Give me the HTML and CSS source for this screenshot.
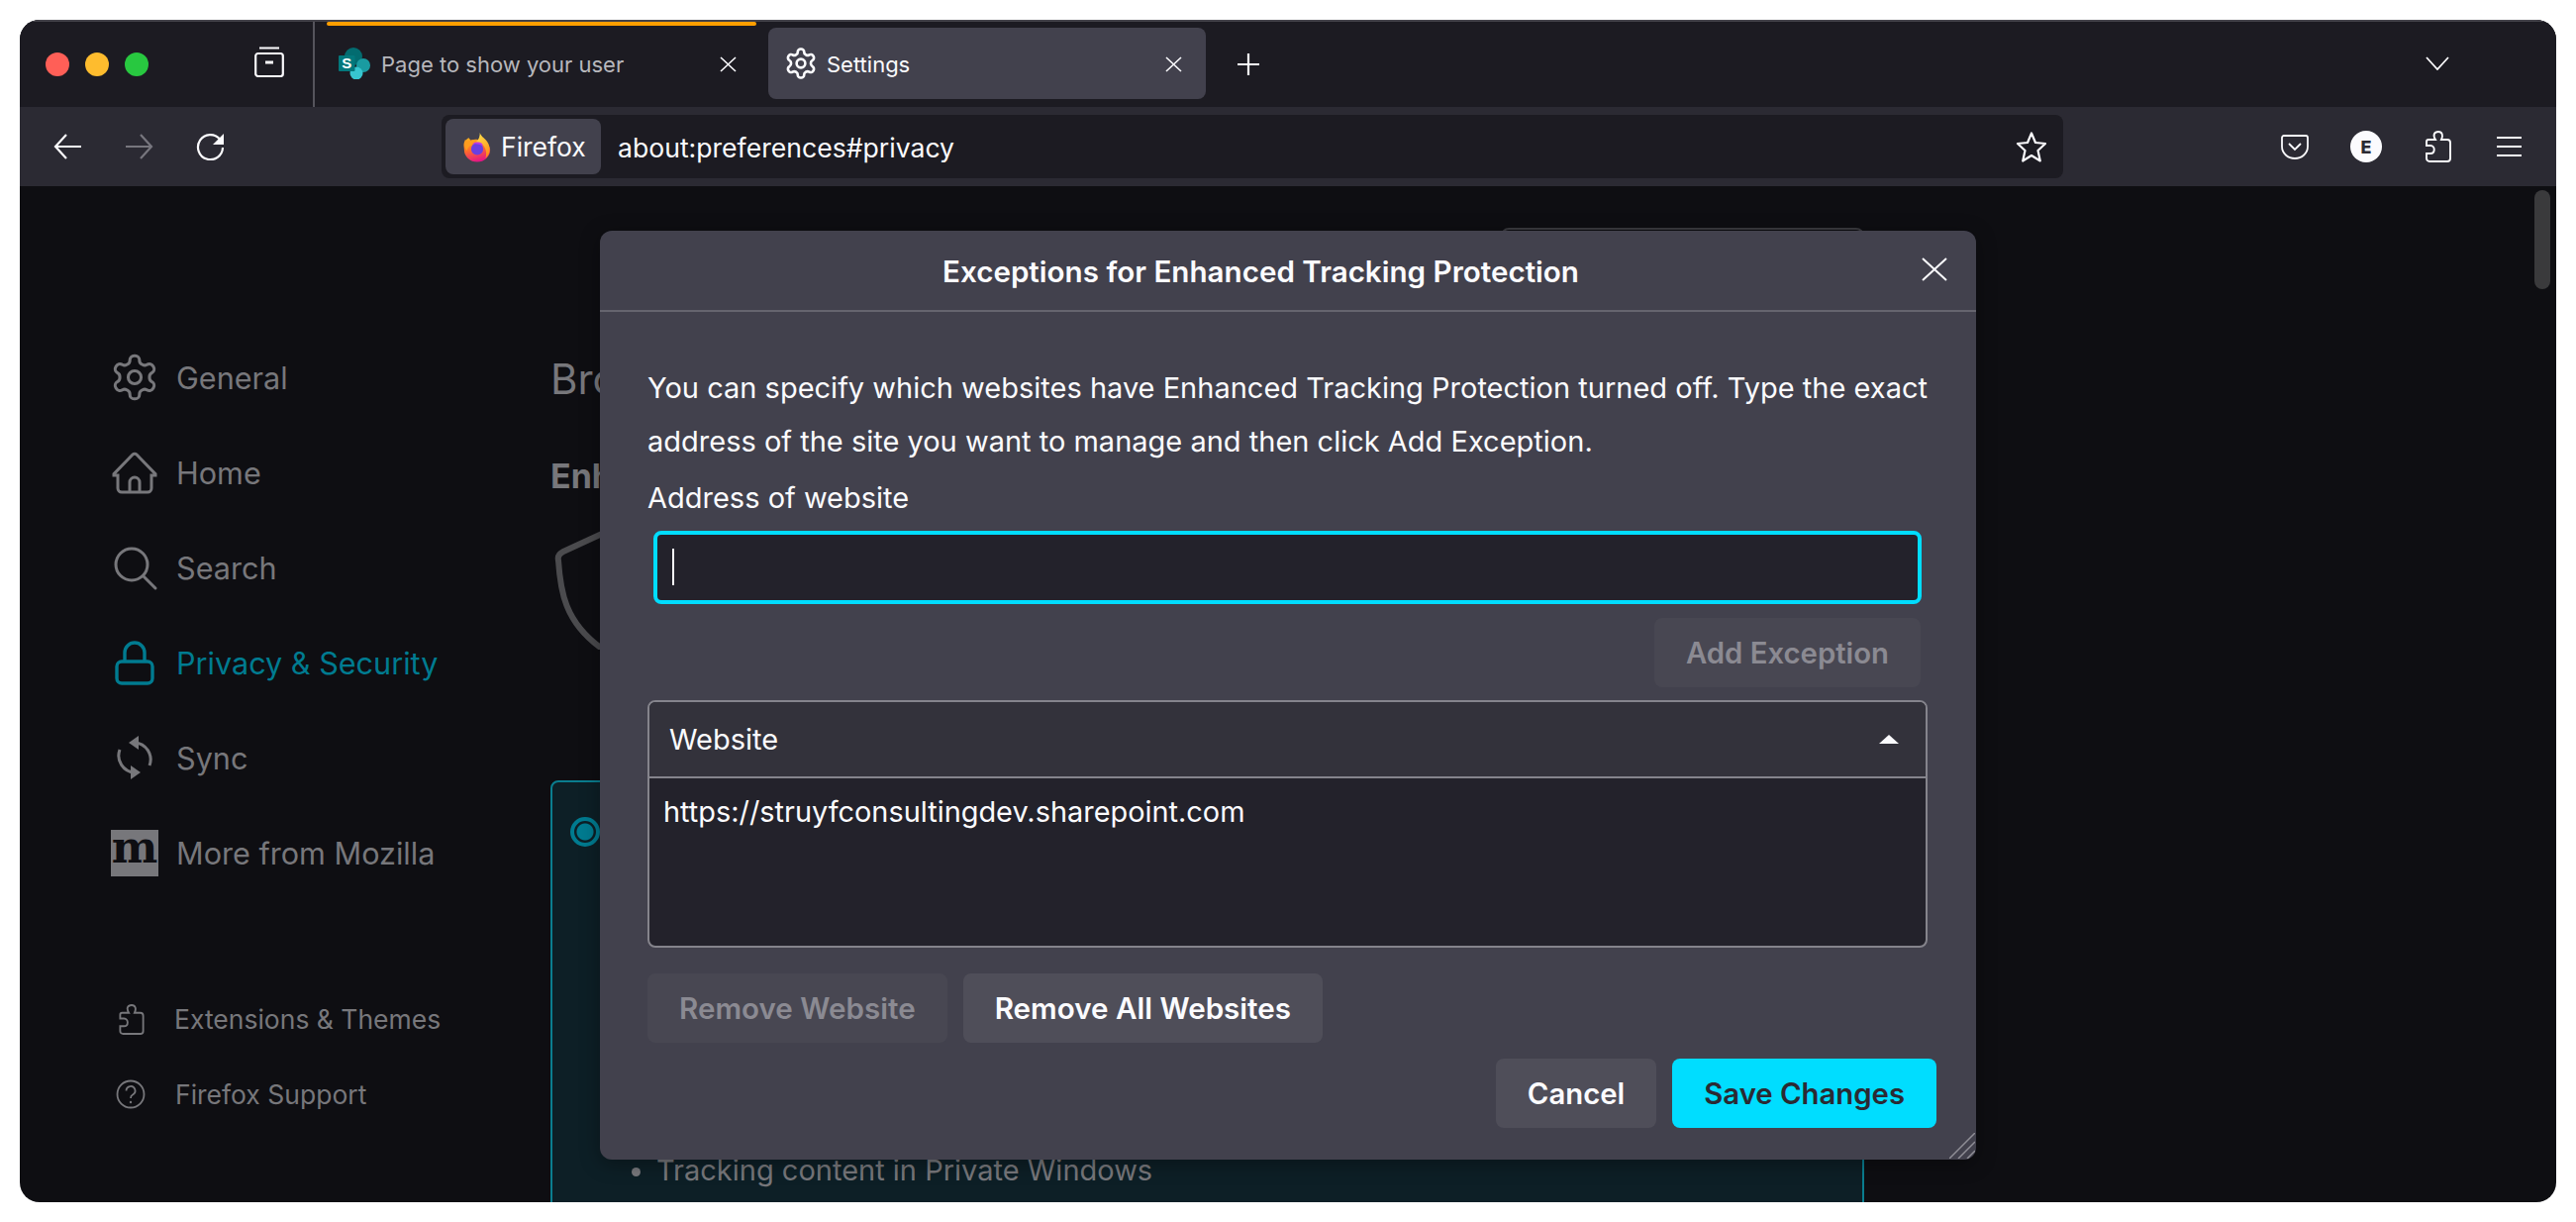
FILE: index.html
```html
<!DOCTYPE html>
<html lang="en">
<head>
    <meta charset="UTF-8">
    <title>Settings</title>
    <link rel="stylesheet" href="styles.css">
</head>
<body>
    <svg class="defs" aria-hidden="true">
        <symbol id="gear" viewBox="1 1 22 22">
            <path d="M12.22 2h-.44a2 2 0 0 0-2 2v.18a2 2 0 0 1-1 1.73l-.43.25a2 2 0 0 1-2 0l-.15-.08a2 2 0 0 0-2.73.73l-.22.38a2 2 0 0 0 .73 2.73l.15.1a2 2 0 0 1 1 1.72v.51a2 2 0 0 1-1 1.74l-.15.09a2 2 0 0 0-.73 2.73l.22.38a2 2 0 0 0 2.73.73l.15-.08a2 2 0 0 1 2 0l.43.25a2 2 0 0 1 1 1.73V20a2 2 0 0 0 2 2h.44a2 2 0 0 0 2-2v-.18a2 2 0 0 1 1-1.73l.43-.25a2 2 0 0 1 2 0l.15.08a2 2 0 0 0 2.73-.73l.22-.39a2 2 0 0 0-.73-2.73l-.15-.08a2 2 0 0 1-1-1.74v-.5a2 2 0 0 1 1-1.74l.15-.09a2 2 0 0 0 .73-2.73l-.22-.38a2 2 0 0 0-2.73-.73l-.15.08a2 2 0 0 1-2 0l-.43-.25a2 2 0 0 1-1-1.73V4a2 2 0 0 0-2-2z"/>
            <circle cx="12" cy="12" r="3"/>
        </symbol>
        <symbol id="puzzle" viewBox="0 0 26 32">
            <path d="M10 9C7 4 9 1 13 1c4 0 5 4 3 8h6a3 3 0 0 1 3 3v16a3 3 0 0 1-3 3H4a3 3 0 0 1-3-3v-5h4c5 0 5-8 0-8H1v-4a2 2 0 0 1 2-2z"/>
        </symbol>
    </svg>

    <div class="window">
        <!-- tab strip -->
        <div class="tabbar">
            <div class="lights">
                <span class="light red"></span>
                <span class="light yellow"></span>
                <span class="light green"></span>
            </div>
            <svg class="fxview" viewBox="0 0 30 31" fill="none" stroke="#fbfbfe" stroke-width="2.2">
                <path d="M5 1.5h20"/>
                <rect x="1.2" y="7" width="27.6" height="23" rx="2.5"/>
                <path d="M11 16h8" stroke-width="3"/>
            </svg>
            <div class="tab-sep"></div>
            <div class="tab tab-page">
                <span class="tab-line"></span>
                <svg class="favicon" viewBox="0 0 32 32">
                    <circle cx="15" cy="9" r="9" fill="#036c70"/>
                    <circle cx="25" cy="18" r="7" fill="#1a9ba1"/>
                    <circle cx="18" cy="26" r="6.500" fill="#37c6d0"/>
                    <rect x="0" y="8" width="16.500" height="16" rx="1" fill="#03787c"/>
                    <text x="8.200" y="21" class="favicon-s">S</text>
                </svg>
                <span class="tab-title">Page to show your user</span>
                <svg class="tab-close" viewBox="0 0 17 16" fill="none" stroke="#fbfbfe" stroke-width="1.6"><path d="M1 1l15 14M16 1L1 15"/></svg>
            </div>
            <div class="tab tab-active">
                <svg class="tab-gear" fill="none" stroke="#fbfbfe" stroke-width="1.8"><use href="#gear"/></svg>
                <span class="tab-title">Settings</span>
                <svg class="tab-close" viewBox="0 0 17 16" fill="none" stroke="#fbfbfe" stroke-width="1.6"><path d="M1 1l15 14M16 1L1 15"/></svg>
            </div>
            <svg class="new-tab" viewBox="0 0 24 24" fill="none" stroke="#fbfbfe" stroke-width="2.2"><path d="M12 1v22M1 12h22"/></svg>
            <svg class="tab-list" viewBox="0 0 24 14" fill="none" stroke="#fbfbfe" stroke-width="1.8"><path d="M1 1l11 12L23 1"/></svg>
        </div>

        <!-- toolbar -->
        <div class="toolbar">
            <svg class="nav-icon" viewBox="0 0 29 26" fill="none" stroke="#fbfbfe" stroke-width="2.2"><path d="M28 13H2M13 1L2 13l11 12"/></svg>
            <svg class="nav-icon nav-forward" viewBox="0 0 29 26" fill="none" stroke="#77767e" stroke-width="2.2"><path d="M1 13h26M16 1l11 12-11 12"/></svg>
            <svg class="nav-icon nav-reload" viewBox="0 0 29 28" fill="none" stroke="#fbfbfe" stroke-width="2.2">
                <path d="M24 6.5A12.500 12.500 0 1 0 27 15"/>
                <path d="M28 1v11H17z" fill="#fbfbfe" stroke="none"/>
            </svg>
            <div class="urlbar">
                <div class="identity">
                    <svg class="fx-logo" viewBox="0 0 32 32">
                        <defs>
                            <linearGradient id="fxBase" x1="0.2" y1="0" x2="0.5" y2="1">
                                <stop offset="0" stop-color="#ffb31f"/>
                                <stop offset="0.5" stop-color="#ff6a2c"/>
                                <stop offset="1" stop-color="#e31587"/>
                            </linearGradient>
                            <linearGradient id="fxFlame" x1="0.3" y1="0" x2="0.7" y2="1">
                                <stop offset="0" stop-color="#ffe04a"/>
                                <stop offset="1" stop-color="#ff8a16"/>
                            </linearGradient>
                        </defs>
                        <path d="M2 11c1-2 3-4 5-5l3 4c2-1 4-2 6-2 6 0 14 4 14 11a14 13 0 0 1-28 0c0-3-1-5 0-8z" fill="url(#fxBase)"/>
                        <path d="M19 0c0 3 3 5 6 8 4 4 5 9 4 14-1 3-3 5-4 6 2-6 0-13-5-16-2-1-4-1-5-2 3-2 4-6 4-10z" fill="url(#fxFlame)"/>
                        <path d="M3 8l3 2c3-2 8-3 11-2-2 1-6 3-6 5-1 2-3 1-4 3-1 1-2 3-2 4-3-3-3-8-2-12z" fill="#ff9d1e"/>
                        <circle cx="16" cy="18" r="6.500" fill="#6a3fe0"/>
                        <path d="M11 13c2-3 7-3 10-1 1 1 1 2 1 3-3-2-7-3-11-2z" fill="#c139e6"/>
                    </svg>
                    <span>Firefox</span>
                </div>
                <span class="url-text">about:preferences#privacy</span>
                <svg class="star" viewBox="0 0 32 31" fill="none" stroke="#fbfbfe" stroke-width="2.2" stroke-linejoin="round"><path d="M16 1.500l4 9.500 10 1-7.500 7 2.300 10.500L16 24l-8.800 5.500L9.500 19 2 12l10-1z"/></svg>
            </div>
            <svg class="tool-pocket" viewBox="0 0 28 25" fill="none" stroke="#fbfbfe" stroke-width="1.8">
                <path d="M3 1h22a2 2 0 0 1 2 2v9a13 12 0 0 1-26 0V3a2 2 0 0 1 2-2z"/>
                <path d="M8 9l6 6 6-6"/>
            </svg>
            <span class="avatar">E</span>
            <svg class="tool-puzzle" fill="none" stroke="#fbfbfe" stroke-width="1.9"><use href="#puzzle"/></svg>
            <div class="hamburger"><span></span><span></span><span></span></div>
        </div>

        <!-- page -->
        <div class="page">
            <nav class="sidebar">
                <a class="side-row">
                    <svg class="side-icon" fill="none" stroke="currentColor" stroke-width="1.400"><use href="#gear"/></svg>
                    General
                </a>
                <a class="side-row">
                    <svg class="side-icon" viewBox="0 0 24 24" fill="none" stroke="currentColor" stroke-width="1.5">
                        <path d="M1.500 12.800L11 3a1.400 1.400 0 0 1 2 0l9.500 9.800v.7h-2V20a2 2 0 0 1-2 2H5.500a2 2 0 0 1-2-2v-6.500h-2z"/>
                        <path d="M9.500 22v-5a2.500 2.500 0 0 1 5 0v5"/>
                    </svg>
                    Home
                </a>
                <a class="side-row">
                    <svg class="side-icon" viewBox="0 0 24 24" fill="none" stroke="currentColor" stroke-width="1.5">
                        <circle cx="10.500" cy="10.500" r="8"/>
                        <path d="M16.500 16.500l6 6" stroke-linecap="round"/>
                    </svg>
                    Search
                </a>
                <a class="side-row side-active">
                    <svg class="side-icon" viewBox="0 0 24 24" fill="none" stroke="currentColor" stroke-width="1.700">
                        <rect x="3" y="11.500" width="18" height="11" rx="2.500"/>
                        <path d="M7 11.500V7a5 5 0 0 1 10 0v4.500"/>
                    </svg>
                    Privacy &amp; Security
                </a>
                <a class="side-row">
                    <svg class="side-icon" viewBox="0 0 24 24" fill="none" stroke="currentColor" stroke-width="1.500">
                        <path d="M12 4.500a8.500 8.500 0 0 1 7.500 11.500"/>
                        <path d="M12 19.500A8.500 8.500 0 0 1 4.500 8"/>
                        <path d="M14 1l-5 3.500L14 8z" fill="currentColor" stroke="none"/>
                        <path d="M10 16l5 3.500L10 23z" fill="currentColor" stroke="none"/>
                    </svg>
                    Sync
                </a>
                <a class="side-row">
                    <span class="moz-logo">m</span>
                    More from Mozilla
                </a>
                <a class="side-foot side-foot-first">
                    <svg class="foot-puzzle" fill="none" stroke="currentColor" stroke-width="1.900"><use href="#puzzle"/></svg>
                    Extensions &amp; Themes
                </a>
                <a class="side-foot">
                    <svg class="foot-help" viewBox="0 0 30 30" fill="none" stroke="currentColor" stroke-width="1.800">
                        <circle cx="15" cy="15" r="13.500"/>
                        <path d="M10.500 11.500a4.500 4.500 0 1 1 6.500 4c-1.500.8-2 1.500-2 3.500"/>
                        <circle cx="15" cy="23" r="1.200" fill="currentColor" stroke="none"/>
                    </svg>
                    Firefox Support
                </a>
            </nav>

            <div class="content">
                <div class="find-box"></div>
                <h1 class="page-title">Browser Privacy</h1>
                <h2 class="section-title">Enhanced Tracking Protection</h2>
                <svg class="shield" viewBox="0 0 100 120" fill="none" stroke="#4b4b4e" stroke-width="6"><path d="M50 3L11 21c-4 2-6 5-5 9 2 30 6 62 44 89 38-27 42-59 44-89 1-4-1-7-5-9z"/></svg>
                <div class="option-box">
                    <span class="radio"></span>
                    <ul class="option-list">
                        <li>Tracking content in Private Windows</li>
                    </ul>
                </div>
            </div>
            <div class="scrollbar"></div>
        </div>

        <!-- dialog -->
        <div class="dialog">
            <div class="dialog-head">
                <div class="dialog-title">Exceptions for Enhanced Tracking Protection</div>
                <svg class="dialog-close" viewBox="0 0 26 24" fill="none" stroke="#fbfbfe" stroke-width="2"><path d="M1 1l24 22M25 1L1 23"/></svg>
            </div>
            <div class="dialog-body">
                <p class="desc">You can specify which websites have Enhanced Tracking Protection turned off. Type the exact address of the site you want to manage and then click Add Exception.</p>
                <div class="field-label">Address of website</div>
                <div class="address-input"><span class="caret"></span></div>
                <div class="add-row"><button class="btn btn-disabled">Add Exception</button></div>
                <div class="site-table">
                    <div class="site-head">
                        <span>Website</span>
                        <span class="sort-arrow"></span>
                    </div>
                    <div class="site-rows">https://struyfconsultingdev.sharepoint.com</div>
                </div>
                <div class="remove-row">
                    <button class="btn btn-disabled">Remove Website</button>
                    <button class="btn">Remove All Websites</button>
                </div>
            </div>
            <div class="dialog-foot">
                <button class="btn">Cancel</button>
                <button class="btn btn-primary">Save Changes</button>
            </div>
            <svg class="grip" viewBox="0 0 26 26" stroke="#8f8e96" stroke-width="1.500"><path d="M0 26L26 0M9 26L26 9M18 26l8-8"/></svg>
        </div>
    </div>
</body>
</html>
```

FILE: styles.css
```css
* {
    box-sizing: border-box;
}

body {
    margin: 0;
    padding: 20px;
    height: 1234px;
    background: #fff;
    font-family: Inter, "Noto Sans", sans-serif;
    overflow: hidden;
}

.defs {
    display: none;
}

.window {
    position: relative;
    width: 2562px;
    height: 1194px;
    border-radius: 20px;
    overflow: hidden;
    display: flex;
    flex-direction: column;
    background: #0e0e12;
}

/* tab strip */
.tabbar {
    height: 88px;
    flex: none;
    display: flex;
    align-items: center;
    background: #1c1b22;
    border-top: 2px solid #44434a;
}

.lights {
    display: flex;
    gap: 16px;
    margin-left: 26px;
}

.light {
    width: 24px;
    height: 24px;
    border-radius: 50%;
}

.red { background: #ff5f57; }
.yellow { background: #febc2e; }
.green { background: #28c840; }

.fxview {
    width: 30px;
    height: 31px;
    margin-left: 107px;
    margin-top: -6px;
}

.tab-sep {
    width: 2px;
    height: 86px;
    margin-left: 29px;
    background: #55545c;
}

.tab {
    position: relative;
    display: flex;
    align-items: center;
    height: 72px;
    margin-top: -2px;
    font-size: 22px;
    color: #b7b7bc;
}

.tab-page {
    width: 434px;
    margin-left: 12px;
    padding-left: 12px;
}

.tab-line {
    position: absolute;
    left: 0;
    right: 0;
    top: -6px;
    height: 4px;
    border-radius: 2px;
    background: #ff9f00;
}

.favicon {
    width: 32px;
    height: 32px;
    flex: none;
}

.favicon-s {
    font-family: "Liberation Sans", sans-serif;
    font-size: 15px;
    font-weight: 700;
    fill: #fff;
    text-anchor: middle;
}

.tab-title {
    margin-left: 11px;
    padding-top: 1px;
}

.tab-close {
    position: absolute;
    right: 20px;
    top: 29px;
    width: 17px;
    height: 16px;
}

.tab-active {
    width: 442px;
    margin-left: 12px;
    padding-left: 17px;
    border-radius: 8px;
    background: #42414d;
    color: #fbfbfe;
}

.tab-active .tab-title {
    margin-left: 10px;
}

.tab-active .tab-close {
    right: 24px;
}

.tab-gear {
    width: 32px;
    height: 32px;
}

.new-tab {
    width: 24px;
    height: 24px;
    margin-left: 31px;
}

.tab-list {
    width: 24px;
    height: 14px;
    margin-left: auto;
    margin-right: 108px;
    margin-top: -2px;
}

/* toolbar */
.toolbar {
    height: 80px;
    flex: none;
    display: flex;
    align-items: center;
    padding: 0 35px 0 34px;
    background: #2b2a33;
}

.nav-icon {
    width: 29px;
    height: 26px;
    flex: none;
}

.nav-forward {
    margin-left: 43px;
}

.nav-reload {
    height: 28px;
    margin-left: 43px;
}

.urlbar {
    width: 1638px;
    height: 64px;
    margin-left: 219px;
    padding: 4px 16px 4px 4px;
    display: flex;
    align-items: center;
    border-radius: 8px;
    background: #1c1b22;
    color: #fbfbfe;
}

.identity {
    width: 157px;
    height: 56px;
    padding-left: 17px;
    display: flex;
    align-items: center;
    gap: 9px;
    border-radius: 8px;
    background: #42414d;
    font-size: 26.5px;
}

.fx-logo {
    width: 30px;
    height: 31px;
}

.url-text {
    margin-left: 17px;
    padding-top: 2px;
    font-size: 26.6px;
}

.star {
    width: 32px;
    height: 31px;
    margin-left: auto;
}

.tool-pocket {
    width: 28px;
    height: 25px;
    margin-left: 220px;
}

.avatar {
    width: 32px;
    height: 32px;
    margin-left: 42px;
    display: flex;
    align-items: center;
    justify-content: center;
    border-radius: 50%;
    background: #fbfbfe;
    color: #2b2a33;
    font-size: 18px;
    font-weight: 800;
}

.tool-puzzle {
    width: 26px;
    height: 32px;
    margin-left: 44px;
}

.hamburger {
    width: 25px;
    height: 20px;
    margin-left: 46px;
    display: flex;
    flex-direction: column;
    justify-content: space-between;
}

.hamburger span {
    height: 2px;
    background: #fbfbfe;
}

/* page behind the dialog */
.page {
    flex: 1;
    min-height: 0;
    display: flex;
    position: relative;
    color: #77777b;
}

.sidebar {
    width: 536px;
    flex: none;
    padding: 145px 0 0 92px;
}

.side-row {
    height: 96px;
    display: flex;
    align-items: center;
    gap: 18px;
    font-size: 30.6px;
}

.side-active {
    color: #007b90;
}

.side-icon {
    width: 48px;
    height: 48px;
    flex: none;
}

.moz-logo {
    width: 48px;
    height: 47px;
    flex: none;
    display: flex;
    align-items: center;
    justify-content: center;
    background: #77777b;
    color: #0e0e12;
    font-family: "DejaVu Serif", serif;
    font-size: 44px;
    font-weight: 700;
    line-height: 1;
    padding-bottom: 10px;
}

.side-foot {
    height: 76px;
    display: flex;
    align-items: center;
    font-size: 26.5px;
}

.side-foot-first {
    margin-top: 82px;
}

.foot-puzzle {
    width: 26px;
    height: 31px;
    margin: 0 30px 0 8px;
    flex: none;
}

.foot-help {
    width: 30px;
    height: 30px;
    margin: 0 30px 0 5px;
    flex: none;
}

.content {
    width: 1327px;
    flex: none;
    padding-top: 42px;
    height: 1100px;
}

.find-box {
    width: 367px;
    height: 64px;
    margin-left: auto;
    border: 2px solid #3a3a3f;
    border-radius: 8px;
}

.page-title {
    margin: 64px 0 0;
    font-size: 42px;
    font-weight: 400;
    line-height: 50px;
    white-space: nowrap;
}

.section-title {
    margin: 51px 0 0;
    font-size: 34px;
    font-weight: 700;
    line-height: 44px;
    white-space: nowrap;
}

.shield {
    display: block;
    width: 100px;
    height: 120px;
    margin: 33px 0 0 2px;
}

.option-box {
    margin-top: 132px;
    height: 500px;
    padding: 35px 0 0 18px;
    border: 2px solid #0a7d8f;
    border-radius: 8px 8px 0 0;
    background: #0d1f26;
}

.radio {
    display: block;
    width: 30px;
    height: 30px;
    border: 4px solid #007b90;
    border-radius: 50%;
    background: radial-gradient(circle, #007b90 0 8px, transparent 9px);
}

.option-list {
    margin: 307px 0 0;
    padding-left: 87px;
    font-size: 29px;
    line-height: 40px;
}

.scrollbar {
    position: absolute;
    left: 2540px;
    top: 4px;
    width: 16px;
    height: 100px;
    border-radius: 8px;
    background: #3a3a3c;
}

/* dialog */
.dialog {
    position: absolute;
    left: 586px;
    top: 213px;
    width: 1390px;
    height: 938px;
    border-radius: 12px;
    background: #42414d;
    color: #fbfbfe;
    box-shadow: 0 4px 20px rgba(0, 0, 0, 0.35);
    font-size: 29px;
}

.dialog-head {
    height: 82px;
    display: flex;
    align-items: center;
    padding-right: 29px;
    border-bottom: 2px solid #65646e;
}

.dialog-title {
    flex: 1;
    text-align: center;
    font-size: 29.6px;
    font-weight: 600;
    padding-top: 2px;
}

.dialog-close {
    width: 26px;
    height: 24px;
    margin-top: -2px;
}

.dialog-body {
    padding: 50px 40px 0 48px;
}

.desc {
    margin: 0 9px 0 0;
    line-height: 54px;
}

.field-label {
    margin-top: 10px;
    line-height: 40px;
}

.address-input {
    height: 74px;
    margin: 13px 15px 0 6px;
    padding: 14px 0 0 15px;
    border: 4px solid #00ddff;
    border-radius: 8px;
    background: #23222b;
}

.caret {
    display: block;
    width: 2px;
    height: 37px;
    background: #fbfbfe;
}

.add-row {
    margin-top: 14px;
    padding-right: 16px;
    display: flex;
    justify-content: flex-end;
}

.btn {
    height: 70px;
    padding: 0 32px;
    border: 0;
    border-radius: 8px;
    background: #4f4e59;
    color: #fbfbfe;
    font: 600 29.3px Inter, "Noto Sans", sans-serif;
}

.btn-disabled {
    background: #484752;
    color: #8b8a92;
}

.btn-primary {
    background: #00ddff;
    color: #2b2a33;
}

.site-table {
    height: 250px;
    margin-top: 13px;
    margin-right: 9px;
    border: 2px solid #85848c;
    border-radius: 8px;
    overflow: hidden;
    background: #23222b;
}

.site-head {
    height: 77px;
    display: flex;
    align-items: center;
    justify-content: space-between;
    padding: 0 27px 0 20px;
    background: #33323b;
    border-bottom: 2px solid #85848c;
}

.sort-arrow {
    width: 0;
    height: 0;
    border-left: 10px solid transparent;
    border-right: 10px solid transparent;
    border-bottom: 9px solid #fbfbfe;
}

.site-rows {
    padding: 14px 0 0 14px;
    font-size: 28.9px;
    line-height: 40px;
}

.remove-row {
    margin-top: 26px;
    display: flex;
    gap: 16px;
}

.remove-row .btn {
    font-size: 29.6px;
}

.dialog-foot {
    margin-top: 16px;
    padding-right: 40px;
    display: flex;
    justify-content: flex-end;
    gap: 16px;
}

.grip {
    position: absolute;
    right: 1px;
    bottom: 1px;
    width: 26px;
    height: 26px;
}
```
